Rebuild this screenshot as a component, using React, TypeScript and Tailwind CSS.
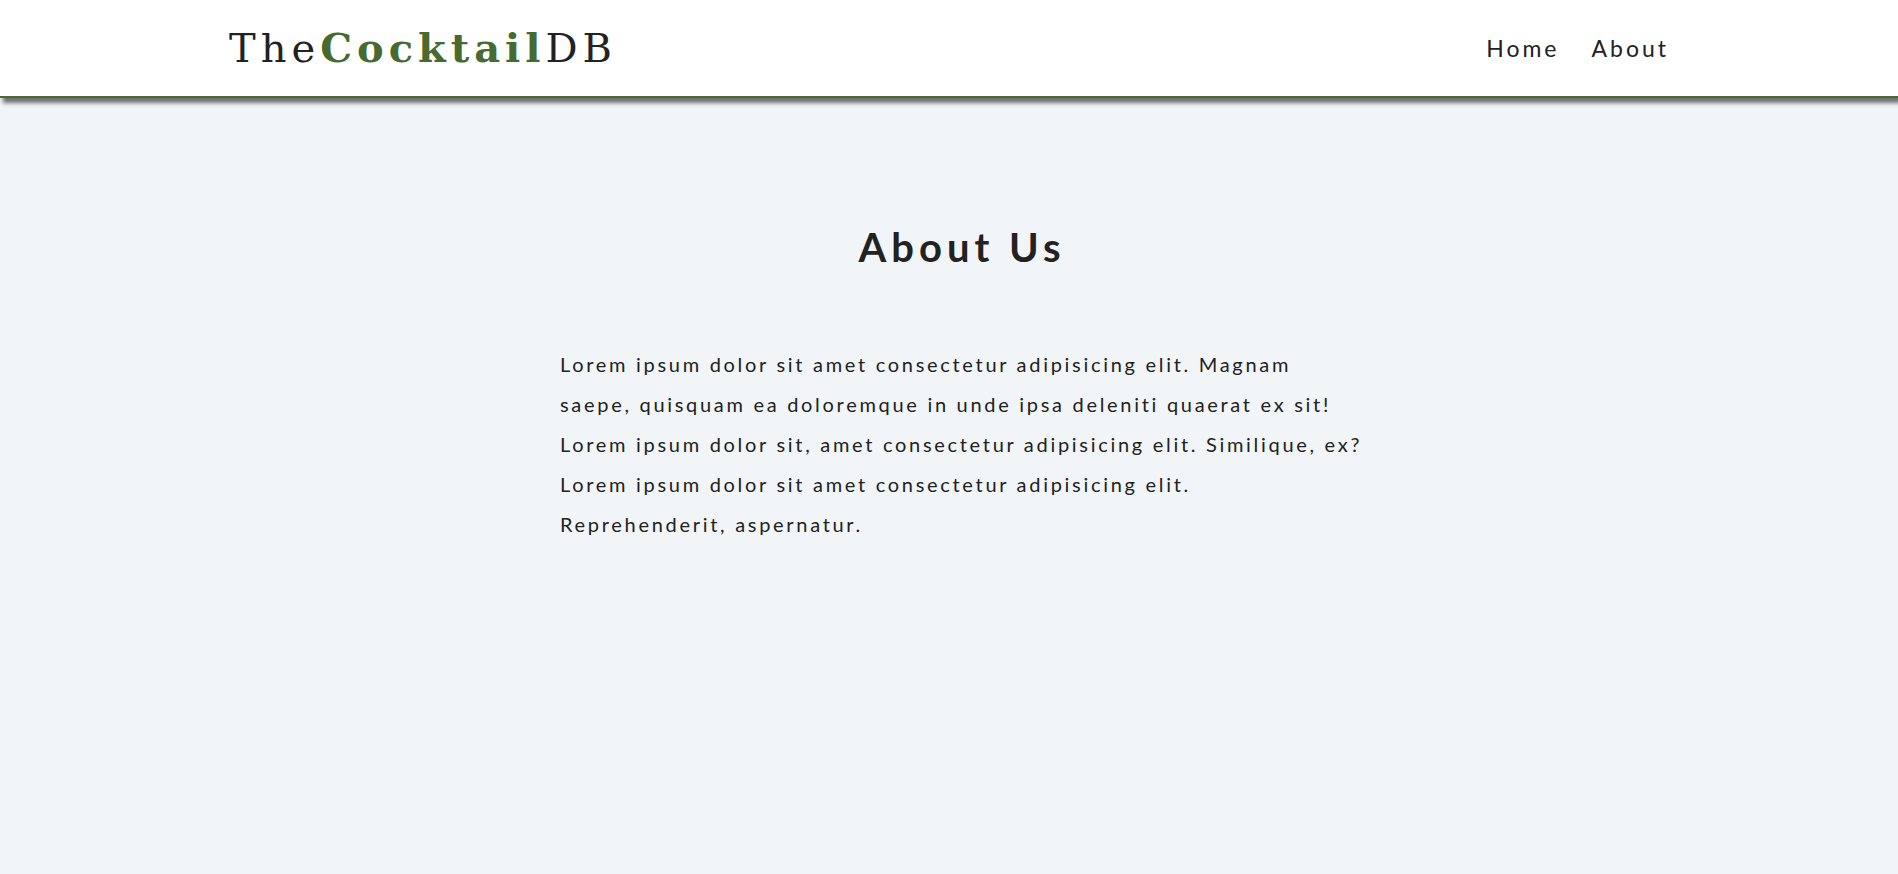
import React from "react"

const links = ["Home", "About"]

const Navbar = () => {
    return (
        <nav className="bg-white border-b-2 border-[#476a30] shadow-[3px_5px_4px_rgba(0,0,0,0.55)] relative z-10">
            <div className="mx-auto max-w-[1440px] h-[96px] flex items-center justify-between">
                <div className="text-[40px] tracking-[5px] text-[#222] font-['DejaVu_Serif',serif] leading-none">
                    The<span className="font-bold text-[#476a30]">Cocktail</span>DB
                </div>
                <ul className="flex items-center gap-[32px] font-['Lato',sans-serif] text-[23px] tracking-[3px] text-[#222]">
                    {links.map((link) => (
                        <li key={link}>
                            <a href="#">{link}</a>
                        </li>
                    ))}
                </ul>
            </div>
        </nav>
    )
}

export default function App() {
    return (
        <div className="min-h-[874px] bg-[#f1f5f8] font-['Lato',sans-serif] text-[#222]">
            <Navbar />
            <section className="mx-auto w-[830px] pl-[26px] pt-[129px]">
                <h1 className="text-center text-[40px] font-bold tracking-[5px] leading-none">
                    About Us
                </h1>
                <p className="mt-[77px] text-[20px] tracking-[2.7px] leading-[40px]">
                    Lorem ipsum dolor sit amet consectetur adipisicing elit. Magnam saepe, quisquam ea doloremque in unde ipsa deleniti quaerat ex sit! Lorem ipsum dolor sit, amet consectetur adipisicing elit. Similique, ex? Lorem ipsum dolor sit amet consectetur adipisicing elit. Reprehenderit, aspernatur.
                </p>
            </section>
        </div>
    )
}
